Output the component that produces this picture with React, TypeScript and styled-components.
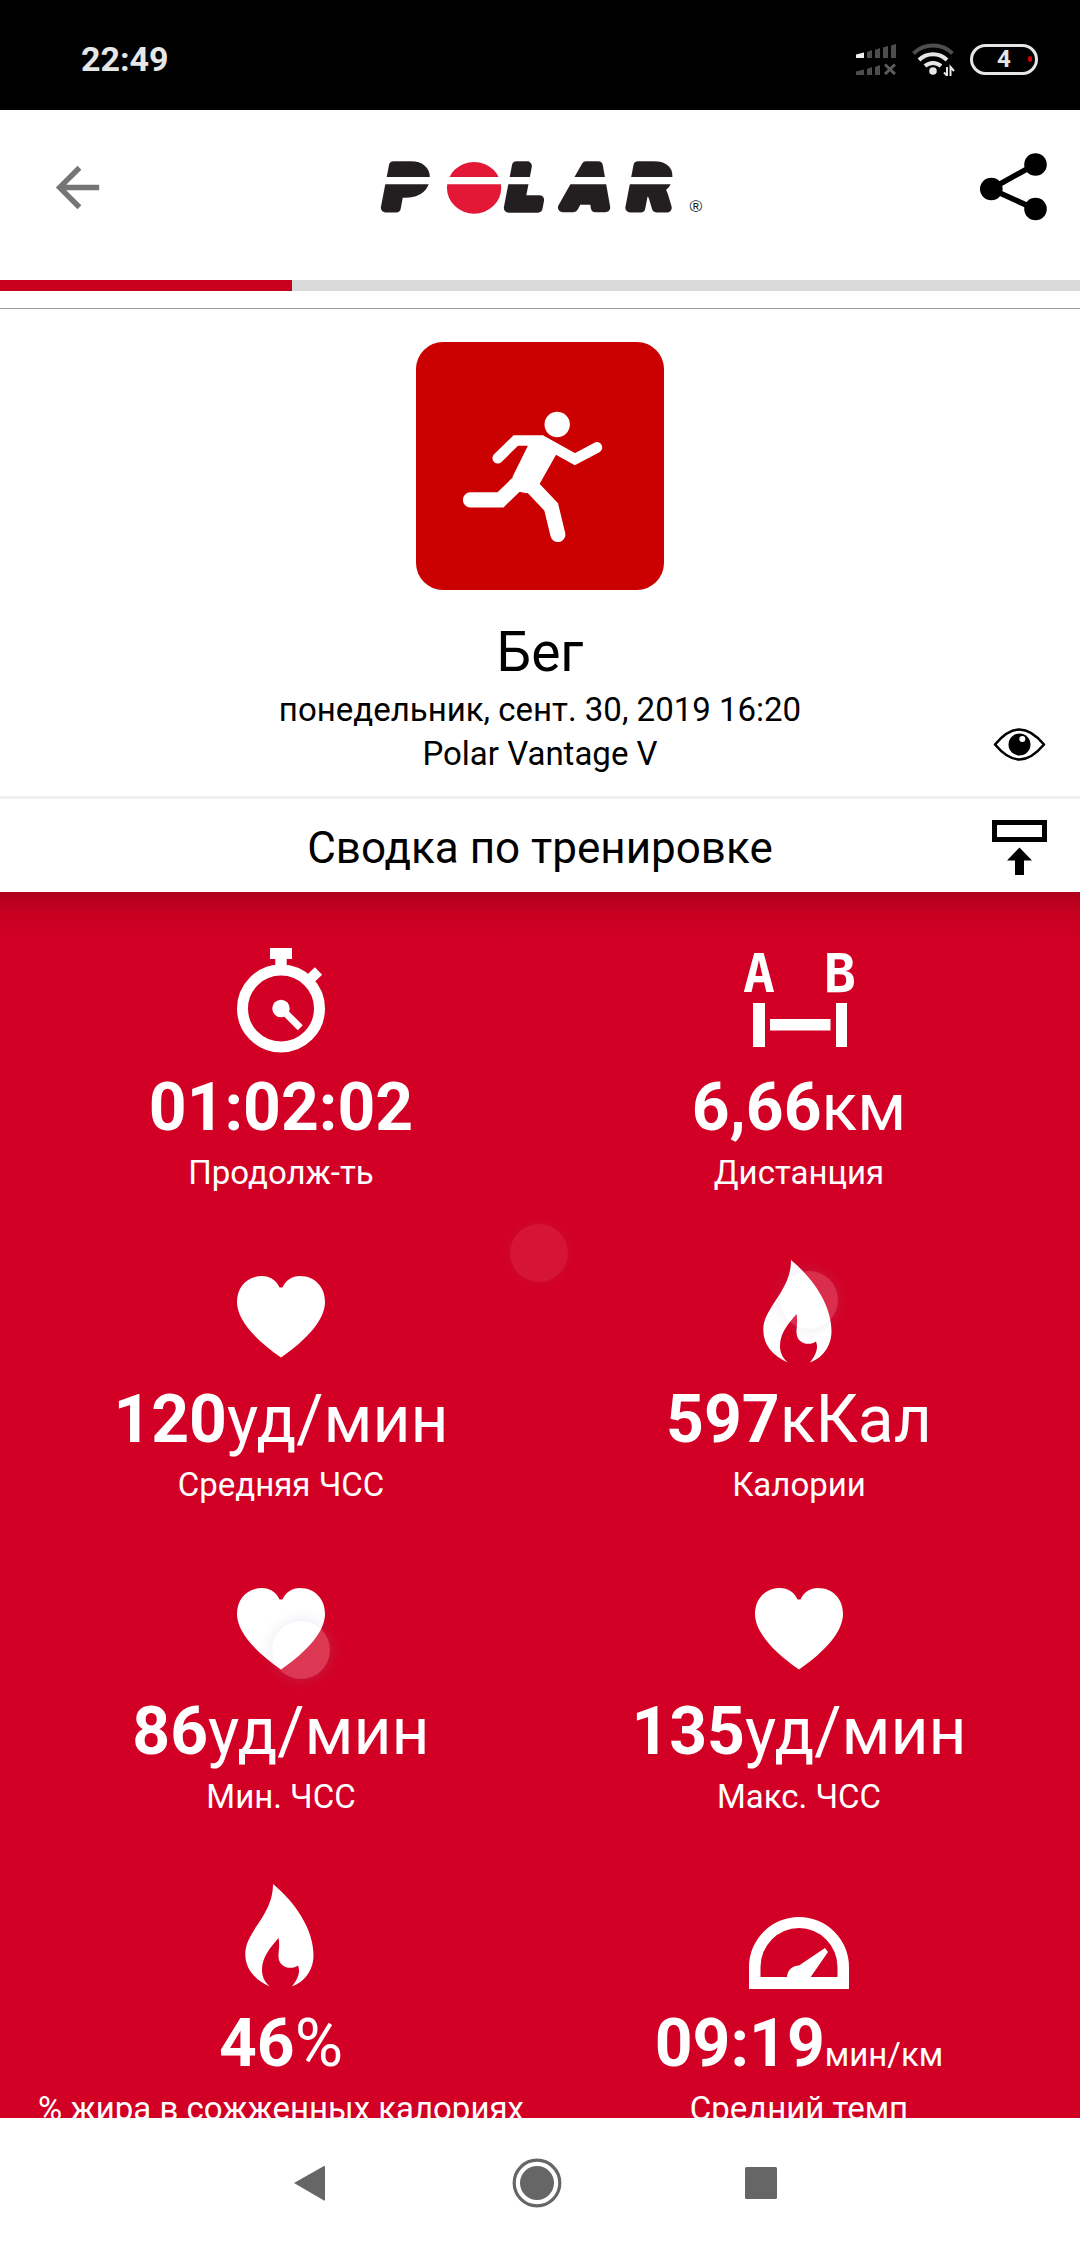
import React from "react";
import styled, { createGlobalStyle } from "styled-components";

const GlobalStyle = createGlobalStyle`
  *, *::before, *::after { box-sizing: border-box; }
  body { margin: 0; background: #fff; }
  h1, h2, p, dl, dt, dd { margin: 0; font-weight: 400; }
`;

const Screen = styled.div`
  display: flex;
  flex-direction: column;
  height: 100vh;
  overflow: hidden;
  background: #fff;
  color: #000;
  font-family: Roboto, "Noto Sans", sans-serif;
`;

const StatusBar = styled.div`
  display: flex;
  flex: none;
  align-items: center;
  justify-content: space-between;
  height: 110px;
  padding: 8px 42px 0 81px;
  background: #000;
  color: #e6e6e6;
`;

const Clock = styled.time`
  font-size: 34px;
  line-height: 44px;
  font-weight: 700;
`;

const StatusIcons = styled.div`
  display: flex;
  align-items: center;
  gap: 15px;
`;

const Battery = styled.div`
  display: flex;
  position: relative;
  align-items: center;
  justify-content: center;
  width: 68px;
  height: 31px;
  border: 3px solid #e6e6e6;
  border-radius: 16px;
  font-size: 24px;
  line-height: 24px;
  font-weight: 700;

  &::after {
    content: "";
    position: absolute;
    right: 3px;
    width: 4px;
    height: 6px;
    border-radius: 2px;
    background: #d00000;
  }
`;

const IconButton = styled.button`
  display: flex;
  align-items: center;
  justify-content: center;
  padding: 0;
  border: 0;
  background: none;
  color: inherit;
  cursor: pointer;

  svg { display: block; }
`;

const Header = styled.header`
  display: grid;
  flex: none;
  grid-template-columns: 1fr auto 1fr;
  align-items: center;
  height: 170px;
  padding: 0 33px 16px;
`;

const BackButton = styled(IconButton)`
  justify-self: start;
  margin-left: 12px;
  color: #757575;
`;

const ShareButton = styled(IconButton)`
  justify-self: end;
`;

const LogoLink = styled.a`
  display: block;

  svg { display: block; overflow: visible; }
`;

const Progress = styled.div`
  flex: none;
  height: 11px;
  background: #dadada;
`;

const ProgressFill = styled.div<{ $value: number }>`
  width: ${(p) => p.$value}%;
  height: 100%;
  background: #c8001e;
`;

const Intro = styled.section`
  display: grid;
  flex: none;
  grid-template-columns: 88px 1fr 88px;
  margin-top: 17px;
  padding-top: 33px;
  padding-bottom: 20px;
  border-top: 1px solid #9e9e9e;
  border-bottom: 3px solid #efefef;
  text-align: center;
`;

const IntroBody = styled.div`
  display: flex;
  grid-column: 2;
  flex-direction: column;
  align-items: center;
`;

const SportTile = styled.div`
  width: 248px;
  height: 248px;
  overflow: hidden;
  border-radius: 27px;
  background: #cb0000;

  svg { display: block; }
`;

const SportName = styled.h1`
  margin-top: 30px;
  margin-bottom: 4px;
  font-size: 55px;
  line-height: 64px;
`;

const Detail = styled.p`
  font-size: 33px;
  line-height: 44px;
`;

const ViewButton = styled(IconButton)`
  align-self: end;
  justify-self: start;
  margin-bottom: 13px;
`;

const SectionBar = styled.div`
  display: grid;
  flex: none;
  grid-template-columns: 88px 1fr 88px;
  align-items: center;
  height: 93px;
  padding-top: 4px;
`;

const SectionTitle = styled.h2`
  grid-column: 2;
  font-size: 44px;
  line-height: 56px;
  text-align: center;
`;

const CollapseButton = styled(IconButton)`
  justify-self: start;
`;

const Stats = styled.main`
  position: relative;
  flex: 1;
  min-height: 0;
  overflow: hidden;
  padding: 50px 22px 0;
  background: linear-gradient(#b0001c, #c90021 24px, #d20025 52px);
  color: #fff;
`;

const StatGrid = styled.dl`
  display: grid;
  grid-template-columns: 1fr 1fr;
  row-gap: 59px;
`;

const Stat = styled.div`
  display: flex;
  flex-direction: column;
  align-items: center;
  white-space: nowrap;

  svg { display: block; overflow: visible; }
`;

const StatLabel = styled.dt`
  order: 3;
  margin-top: 5px;
  font-size: 33px;
  line-height: 44px;
`;

const StatValue = styled.dd`
  order: 2;
  margin-top: 12px;
  font-size: 66px;
  line-height: 76px;

  strong { font-weight: 700; }
`;

const Unit = styled.span<{ $small?: boolean }>`
  font-size: ${(p) => (p.$small ? "33px" : "66px")};
  line-height: 1;
`;

const Bubble = styled.span<{ $x: number; $y: number; $alpha: number }>`
  position: absolute;
  left: ${(p) => p.$x}%;
  top: ${(p) => p.$y}px;
  width: 58px;
  height: 58px;
  margin-left: -30px;
  border-radius: 50%;
  background: rgba(255, 255, 255, ${(p) => p.$alpha});
  box-shadow: 0 0 ${(p) => (p.$alpha > 0.1 ? 14 : 10)}px rgba(150, 150, 190, ${(p) => p.$alpha});
  pointer-events: none;
`;

const NavBar = styled.nav`
  display: flex;
  flex: none;
  align-items: center;
  justify-content: center;
  gap: 161px;
  height: 130px;
  padding-right: 6px;
  background: #fff;
  color: #666;
`;

const SignalIcon = () => (
  <svg width="40" height="31" viewBox="0 0 40 31" fill="#4d4d4d" aria-hidden="true">
    <path fill="#f0f0f0" d="M0 10.5 8 8.5V14H0z" />
    <path d="M11 8l5-2v8h-5zM19 6l5-2v10h-5zM27 3.5l5-1.5v12h-5zM35 1.5 40 0v14h-5z" />
    <path d="M0 27.5l8-2V31H0zM11 25l5-2v8h-5zM19 23l5-2v10h-5z" />
    <path d="M29 20.5 39 30M39 20.5 29 30" stroke="#5c5c5c" strokeWidth="3" />
  </svg>
);

const WifiIcon = () => (
  <svg width="44" height="35" viewBox="0 0 44 35" fill="none" stroke="#e6e6e6" strokeWidth="4" aria-hidden="true">
    <path d="M2.5 11.5A28 28 0 0 1 41.5 11.5" stroke="#4d4d4d" />
    <path d="M8 18A20 20 0 0 1 36 18" />
    <path d="M14 24A12 12 0 0 1 30 24" />
    <circle cx="22" cy="29" r="3.8" fill="#e6e6e6" stroke="none" />
    <path d="M36 25v9M33 30.5l3 3M39.5 34v-9l3.5 4" strokeWidth="2" />
  </svg>
);

const BackIcon = () => (
  <svg width="65" height="65" viewBox="0 0 24 24" fill="currentColor" aria-hidden="true">
    <path d="M20 11H7.83l5.59-5.59L12 4l-8 8 8 8 1.41-1.41L7.83 13H20v-2z" />
  </svg>
);

const PolarLogo = () => (
  <svg width="328" height="53" viewBox="50 90 984 160" role="img" aria-label="Polar">
    <g
      fill="#231f20"
      stroke="#231f20"
      strokeWidth="28"
      strokeLinejoin="round"
      fontFamily="DejaVu Sans, sans-serif"
      fontWeight="700"
      fontStyle="italic"
      fontSize="172"
    >
      <text x="72" y="232">P</text>
      <text x="443" y="232">L</text>
      <text x="621" y="232">A</text>
      <text x="810" y="232">R</text>
    </g>
    <ellipse cx="343" cy="171" rx="82" ry="78" fill="#e31837" />
    <path d="M50 138H992V160H50z" fill="#fff" />
    <text x="993" y="243" fill="#231f20" fontFamily="Liberation Sans, sans-serif" fontSize="52">®</text>
  </svg>
);

const ShareIcon = () => (
  <svg width="67" height="68" viewBox="0 0 67 68" aria-hidden="true">
    <path d="M55 11.5 11 36 55 56" fill="none" stroke="#000" strokeWidth="5.5" />
    <circle cx="55.5" cy="11.5" r="11.3" />
    <circle cx="11.3" cy="36" r="11.3" />
    <circle cx="55.5" cy="56" r="11.3" />
  </svg>
);

const RunnerIcon = () => (
  <svg width="248" height="248" viewBox="48 36 743 743" fill="#fff" role="img" aria-label="Бег">
    <circle cx="471" cy="283" r="38" />
    <path d="M384 345 426 316 468 373 417 464 380 489 353 484 338 438z" />
    <g fill="none" stroke="#fff" strokeLinecap="round">
      <path d="M293 384 347 331H424L524 387 590 352" strokeWidth="32" />
      <path d="M211 509H301L364 448M394 468 453 530 473 613" strokeWidth="45" />
    </g>
  </svg>
);

const EyeIcon = () => (
  <svg width="55" height="36" viewBox="0 0 55 36" aria-hidden="true">
    <path d="M3 17.5C11 8 19 2.5 27.5 2.5S44 8 52 17.5C44 27 36 32.5 27.5 32.5S11 27 3 17.5z" fill="none" stroke="#000" strokeWidth="2.6" strokeLinejoin="round" />
    <circle cx="27.5" cy="17.5" r="11" />
    <circle cx="30.3" cy="12" r="3" fill="#fff" />
  </svg>
);

const CollapseIcon = () => (
  <svg width="55" height="55" viewBox="0 0 55 55" aria-hidden="true">
    <path d="M2.5 2.5H52.5V19.5H2.5z" fill="none" stroke="#000" strokeWidth="5" />
    <path d="M27.5 27.5 40 40.5H32V55H23V40.5H15z" />
  </svg>
);

const StatIcon = ({ children }: { children: React.ReactNode }) => (
  <svg width="110" height="116" viewBox="0 0 110 116" fill="#fff" aria-hidden="true">
    {children}
  </svg>
);

const Stopwatch = () => (
  <StatIcon>
    <path d="M44 6H66V17H60.7V26H49.3V17H44z" />
    <circle cx="55" cy="66.5" r="38.5" fill="none" stroke="#fff" strokeWidth="11" />
    <circle cx="55" cy="66.5" r="8.7" />
    <path d="M55 66.5 74.3 85.7" stroke="#fff" strokeWidth="7" />
    <path d="M81 40 92.5 29" stroke="#fff" strokeWidth="10.5" />
  </StatIcon>
);

const Distance = () => (
  <StatIcon>
    <g fontFamily="DejaVu Sans Mono, monospace" fontWeight="700" fontSize="53">
      <text x="-1" y="50">A</text>
      <text x="80" y="50">B</text>
    </g>
    <path d="M9 61H21V105H9zM92 61H103V105H92zM26 77H86.5V88.5H26z" />
  </StatIcon>
);

const Heart = () => (
  <StatIcon>
    <path d="M53.5 33.5C50 26 44 22 36 22 21 22 11 33 11 48 11 65 28 85 55 103.5 82 85 99 65 99 48 99 33 89 22 74 22 66 22 60 26 56.5 33.5z" />
  </StatIcon>
);

const Flame = () => (
  <StatIcon>
    <path d="M47 6C70 25 87.5 52 87.5 77 87.5 93 78 104 66 108.5 71 102 75 95 72 87.5 66 92 52.5 90.5 52.5 78 52.5 72 54 67 52.5 60 44 70 36 79 36 92 36 99 39 104 43.7 108.5 29 102 19.3 91 19.3 76 19.3 53 47 38 47 6z" />
  </StatIcon>
);

const Gauge = () => (
  <StatIcon>
    <path fillRule="evenodd" d="M5 111V89A50 50 0 0 1 105 89V111zM16.5 99H93.5V89A38.5 39 0 0 0 16.5 89z" />
    <path d="M43 100C43 92 48 88 55 87.5L81 70 84 74 66 100z" />
  </StatIcon>
);

type StatItem = {
  icon: React.ComponentType;
  value: string;
  unit?: string;
  smallUnit?: boolean;
  label: string;
};

const stats: StatItem[] = [
  { icon: Stopwatch, value: "01:02:02", label: "Продолж-ть" },
  { icon: Distance, value: "6,66", unit: "км", label: "Дистанция" },
  { icon: Heart, value: "120", unit: "уд/мин", label: "Средняя ЧСС" },
  { icon: Flame, value: "597", unit: "кКал", label: "Калории" },
  { icon: Heart, value: "86", unit: "уд/мин", label: "Мин. ЧСС" },
  { icon: Heart, value: "135", unit: "уд/мин", label: "Макс. ЧСС" },
  { icon: Flame, value: "46", unit: "%", label: "% жира в сожженных калориях" },
  { icon: Gauge, value: "09:19", unit: "мин/км", smallUnit: true, label: "Средний темп" },
];

export default function App() {
  return (
    <Screen>
      <GlobalStyle />
      <StatusBar>
        <Clock>22:49</Clock>
        <StatusIcons>
          <SignalIcon />
          <WifiIcon />
          <Battery>4</Battery>
        </StatusIcons>
      </StatusBar>

      <Header>
        <BackButton type="button" aria-label="Назад">
          <BackIcon />
        </BackButton>
        <LogoLink href="#" aria-label="Polar">
          <PolarLogo />
        </LogoLink>
        <ShareButton type="button" aria-label="Поделиться">
          <ShareIcon />
        </ShareButton>
      </Header>

      <Progress role="progressbar" aria-valuenow={27} aria-valuemin={0} aria-valuemax={100}>
        <ProgressFill $value={27} />
      </Progress>

      <Intro>
        <IntroBody>
          <SportTile>
            <RunnerIcon />
          </SportTile>
          <SportName>Бег</SportName>
          <Detail>понедельник, сент. 30, 2019 16:20</Detail>
          <Detail>Polar Vantage V</Detail>
        </IntroBody>
        <ViewButton type="button" aria-label="Видимость">
          <EyeIcon />
        </ViewButton>
      </Intro>

      <SectionBar>
        <SectionTitle>Сводка по тренировке</SectionTitle>
        <CollapseButton type="button" aria-label="Свернуть">
          <CollapseIcon />
        </CollapseButton>
      </SectionBar>

      <Stats>
        <StatGrid>
          {stats.map(({ icon: Icon, value, unit, smallUnit, label }) => (
            <Stat key={label}>
              <Icon />
              <StatLabel>{label}</StatLabel>
              <StatValue>
                <strong>{value}</strong>
                {unit && <Unit $small={smallUnit}>{unit}</Unit>}
              </StatValue>
            </Stat>
          ))}
        </StatGrid>
        <Bubble $x={50} $y={332} $alpha={0.08} />
        <Bubble $x={75} $y={379} $alpha={0.18} />
        <Bubble $x={28} $y={729} $alpha={0.22} />
      </Stats>

      <NavBar>
        <IconButton type="button" aria-label="Назад (система)">
          <svg width="64" height="50" viewBox="0 0 64 50" fill="currentColor" aria-hidden="true">
            <path d="M14 25 44 8Q45 7.5 45 9V41.5Q45 43 44 42.5z" />
          </svg>
        </IconButton>
        <IconButton type="button" aria-label="Домой">
          <svg width="64" height="50" viewBox="0 0 64 50" aria-hidden="true">
            <circle cx="32" cy="25" r="22.8" fill="none" stroke="currentColor" strokeWidth="3.2" />
            <circle cx="32" cy="25" r="17" fill="currentColor" />
          </svg>
        </IconButton>
        <IconButton type="button" aria-label="Недавние">
          <svg width="64" height="50" viewBox="0 0 64 50" fill="currentColor" aria-hidden="true">
            <rect x="15" y="9" width="32" height="32" rx="1.5" />
          </svg>
        </IconButton>
      </NavBar>
    </Screen>
  );
}
